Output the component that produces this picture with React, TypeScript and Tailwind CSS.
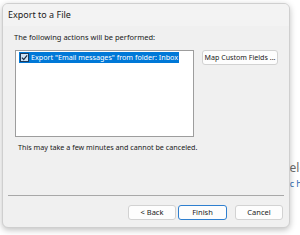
import React from "react";

const font = { fontFamily: '"Noto Sans", "Open Sans", sans-serif' };

function Btn({ label, primary = false, w, size = "text-[7.5px]" }: { label: string; primary?: boolean; w: string; size?: string }) {
  return (
    <button
      className={`${w} ${size} h-[15px] rounded-[3px] bg-[#fdfdfd] leading-none text-[#1a1a1a] flex items-center justify-center whitespace-nowrap ${
        primary ? "border border-[#2f7fcf]" : "border border-[#d2d2d2]"
      }`}
    >
      {label}
    </button>
  );
}

function CheckBox() {
  return (
    <span className="w-[9px] h-[9px] border border-[#1b3a5c] bg-[#cfe3f5] flex items-center justify-center shrink-0">
      <svg width="7" height="7" viewBox="0 0 8 8" fill="none">
        <path d="M1 4.2 3.1 6.3 7 1.5" stroke="#1c2f45" strokeWidth="1.4" />
      </svg>
    </span>
  );
}

export default function App() {
  return (
    <div className="relative w-[300px] h-[235px] bg-white overflow-hidden" style={font}>
      {/* page behind the dialog */}
      <div className="absolute left-[283px] top-[159px] text-[12px] text-[#6b6b6b] whitespace-nowrap">Select</div>
      <div className="absolute left-[272px] top-[177px] text-[9px] text-[#2f6fb5] whitespace-nowrap">Topic help</div>

      <div className="absolute left-[2px] top-[3px] w-[288px] h-[225px] rounded-[6px] border border-[#cfcfcf] bg-[#f0f0f0] shadow-[0_2px_6px_rgba(0,0,0,0.25)] flex flex-col overflow-hidden">
        <div className="h-[22px] bg-[#f3f3f3] flex items-center pl-[5px] text-[9px] text-[#1a1a1a]">Export to a File</div>

        <div className="flex flex-col px-[11px] pt-[4px]">
          <div className="text-[7.5px] leading-[14px] text-[#1a1a1a] whitespace-nowrap">The following actions will be performed:</div>
          <div className="flex gap-[8px] mt-[6px] ml-[1px]">
            <div className="w-[179px] h-[87px] bg-white border border-[#9d9d9d] pt-[1px] pl-[3px]">
              <div className="flex items-center gap-[2px] w-fit h-[11px] bg-[#0078d7] pl-[1px] pr-[1px]">
                <CheckBox />
                <span className="text-[7.2px] leading-none text-white whitespace-nowrap">
                  Export "Email messages" from folder: Inbox
                </span>
              </div>
            </div>
            <Btn label="Map Custom Fields ..." w="w-[76px]" size="text-[7.1px]" />
          </div>
          <div className="mt-[4px] ml-[4px] text-[7.2px] leading-[12px] text-[#1a1a1a] whitespace-nowrap">
            This may take a few minutes and cannot be canceled.
          </div>
        </div>

        <div className="mt-[42px] mx-[5px] h-px bg-[#a8a8a8]" />

        <div className="flex justify-end pr-[6px] mt-[9px]">
          <Btn label="< Back" w="w-[48px]" />
          <div className="ml-[2px]">
            <Btn label="Finish" primary w="w-[49px]" />
          </div>
          <div className="ml-[8px]">
            <Btn label="Cancel" w="w-[48px]" />
          </div>
        </div>
      </div>
    </div>
  );
}
